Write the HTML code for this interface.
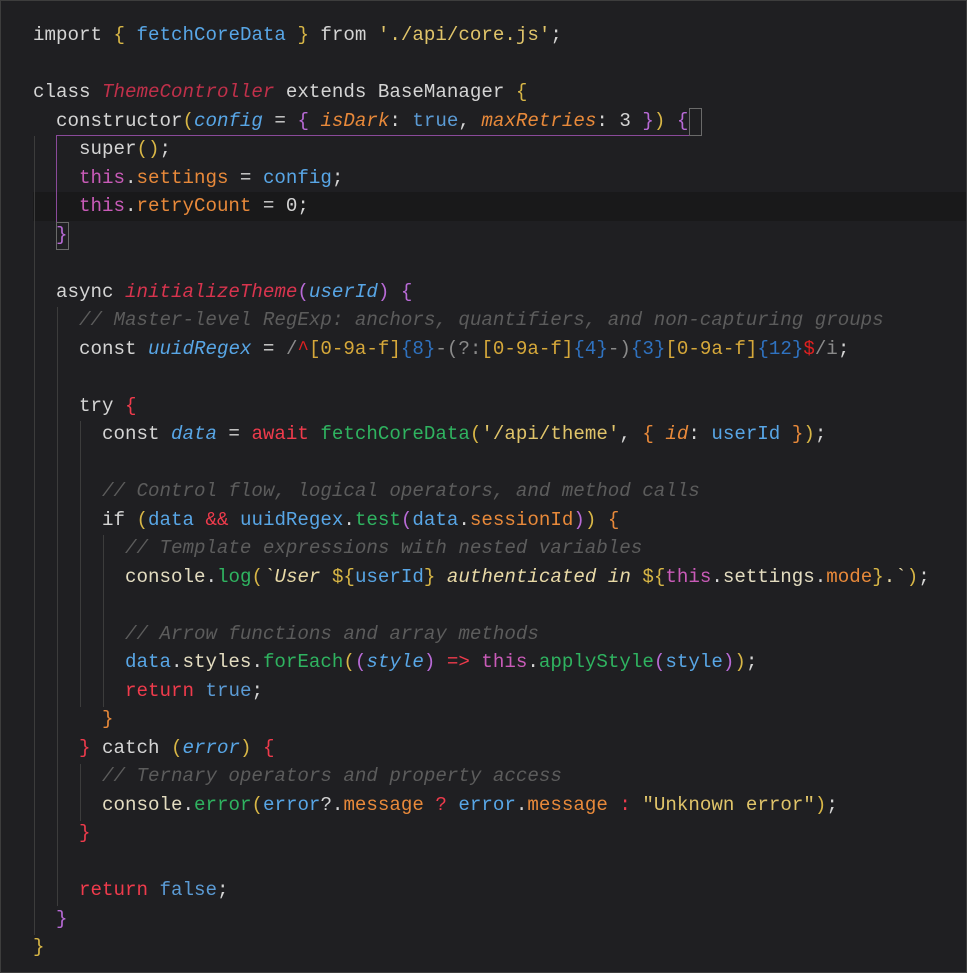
<!DOCTYPE html>
<html><head><meta charset="utf-8"><style>
html,body{margin:0;padding:0;background:#1f1f22;}
body{width:967px;height:973px;position:relative;overflow:hidden;box-sizing:border-box;border:1px solid #3d3d3d;}
#code{position:absolute;left:32px;top:20px;font-family:"Liberation Mono",monospace;font-size:19.17px;color:#d4d4d4;}
.l{height:28.5px;line-height:28.5px;white-space:pre;}
.g{position:absolute;width:1px;background:#3c3c3c;}
.c{color:#5c5c5c;font-style:italic}
.b{color:#58a6e6}
.bi{color:#58a6e6;font-style:italic}
.o{color:#e8893a}
.oi{color:#e8893a;font-style:italic}
.y{color:#d8b646}
.p{color:#b86ad6}
.r{color:#ef3b4c}
.gr{color:#2fb360}
.s{color:#e0c46a}
.t{color:#c95bb8}
.tb{color:#5b9bd5}
.cr{color:#c0304a;font-style:italic}
.cn{color:#e3dcc0}
.rb{color:#2f72c0}
.rx{color:#d6a83a}
.rr{color:#e02020}
.gy{color:#8a8a8a}
.ts{color:#e8d9a6;font-style:italic}
</style></head><body>
<div style="position:absolute;left:32px;top:191px;right:0;height:29px;background:#19191a"></div>
<div class="g" style="left:33px;top:135px;height:799px"></div>
<div class="g" style="left:56px;top:306px;height:599px"></div>
<div class="g" style="left:79px;top:420px;height:286px"></div>
<div class="g" style="left:79px;top:763px;height:57px"></div>
<div class="g" style="left:102px;top:534px;height:172px"></div>
<div style="position:absolute;left:55px;top:134px;width:634px;height:86px;border-top:1px solid #8a4a9a;border-left:1px solid #8a4a9a"></div>
<div style="position:absolute;left:55px;top:221px;width:11px;height:26px;border:1px solid #6a6a6a"></div>
<div style="position:absolute;left:688px;top:107px;width:11px;height:26px;border:1px solid #6a6a6a"></div>
<div id="code"><div class="l">import <span class="y">{</span> <span class="b">fetchCoreData</span> <span class="y">}</span> from <span class="s">'./api/core.js'</span>;</div><div class="l"> </div><div class="l">class <span class="cr">ThemeController</span> extends BaseManager <span class="y">{</span></div><div class="l">  constructor<span class="y">(</span><span class="bi">config</span> = <span class="p">{</span> <span class="oi">isDark</span>: <span class="tb">true</span>, <span class="oi">maxRetries</span>: 3 <span class="p">}</span><span class="y">)</span> <span class="p">{</span></div><div class="l">    super<span class="y">()</span>;</div><div class="l">    <span class="t">this</span>.<span class="o">settings</span> = <span class="b">config</span>;</div><div class="l">    <span class="t">this</span>.<span class="o">retryCount</span> = 0;</div><div class="l">  <span class="p">}</span></div><div class="l"> </div><div class="l">  async <span class="cr" style="color:#d8344e">initializeTheme</span><span class="p">(</span><span class="bi">userId</span><span class="p">)</span> <span class="p">{</span></div><div class="l">    <span class="c">// Master-level RegExp: anchors, quantifiers, and non-capturing groups</span></div><div class="l">    const <span class="bi">uuidRegex</span> = <span class="gy">/</span><span class="rr">^</span><span class="rx">[0-9a-f]</span><span class="rb">{8}</span><span class="gy">-(?:</span><span class="rx">[0-9a-f]</span><span class="rb">{4}</span><span class="gy">-)</span><span class="rb">{3}</span><span class="rx">[0-9a-f]</span><span class="rb">{12}</span><span class="rr">$</span><span class="gy">/i</span>;</div><div class="l"> </div><div class="l">    try <span class="r">{</span></div><div class="l">      const <span class="bi">data</span> = <span class="r">await</span> <span class="gr">fetchCoreData</span><span class="y">(</span><span class="s">'/api/theme'</span>, <span class="o">{</span> <span class="oi">id</span>: <span class="b">userId</span> <span class="o">}</span><span class="y">)</span>;</div><div class="l"> </div><div class="l">      <span class="c">// Control flow, logical operators, and method calls</span></div><div class="l">      if <span class="y">(</span><span class="b">data</span> <span class="r">&amp;&amp;</span> <span class="b">uuidRegex</span>.<span class="gr">test</span><span class="p">(</span><span class="b">data</span>.<span class="o">sessionId</span><span class="p">)</span><span class="y">)</span> <span class="o">{</span></div><div class="l">        <span class="c">// Template expressions with nested variables</span></div><div class="l">        <span class="cn">console</span>.<span class="gr">log</span><span class="y">(</span><span class="ts">`User </span><span class="y">${</span><span class="b">userId</span><span class="y">}</span><span class="ts"> authenticated in </span><span class="y">${</span><span class="t">this</span>.<span class="cn">settings</span>.<span class="o">mode</span><span class="y">}</span><span class="ts" style="font-style:normal">.`</span><span class="y">)</span>;</div><div class="l"> </div><div class="l">        <span class="c">// Arrow functions and array methods</span></div><div class="l">        <span class="b">data</span>.<span class="cn">styles</span>.<span class="gr">forEach</span><span class="y">(</span><span class="p">(</span><span class="bi">style</span><span class="p">)</span> <span class="r">=&gt;</span> <span class="t">this</span>.<span class="gr">applyStyle</span><span class="p">(</span><span class="b">style</span><span class="p">)</span><span class="y">)</span>;</div><div class="l">        <span class="r">return</span> <span class="tb">true</span>;</div><div class="l">      <span class="o">}</span></div><div class="l">    <span class="r">}</span> catch <span class="y">(</span><span class="bi">error</span><span class="y">)</span> <span class="r">{</span></div><div class="l">      <span class="c">// Ternary operators and property access</span></div><div class="l">      <span class="cn">console</span>.<span class="gr">error</span><span class="y">(</span><span class="b">error</span>?.<span class="o">message</span> <span class="r">?</span> <span class="b">error</span>.<span class="o">message</span> <span class="r">:</span> <span class="s">"Unknown error"</span><span class="y">)</span>;</div><div class="l">    <span class="r">}</span></div><div class="l"> </div><div class="l">    <span class="r">return</span> <span class="tb">false</span>;</div><div class="l">  <span class="p">}</span></div><div class="l"><span class="y">}</span></div></div>
</body></html>
